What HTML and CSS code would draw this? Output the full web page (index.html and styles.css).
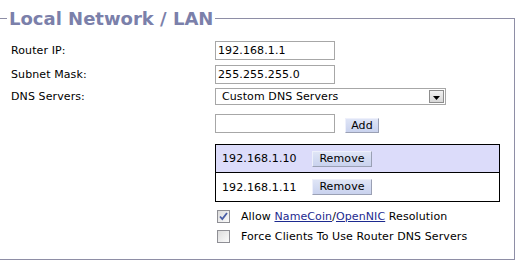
FILE: index.html
```html
<!DOCTYPE html>
<html>
<head>
<meta charset="utf-8">
<link rel="stylesheet" href="styles.css">
</head>
<body>
<fieldset class="panel">
  <legend class="title">Local Network / LAN</legend>
  <div class="form">
    <div class="row r1">
      <span class="label">Router IP:</span>
      <span class="input">192.168.1.1</span>
    </div>
    <div class="row r2">
      <span class="label">Subnet Mask:</span>
      <span class="input">255.255.255.0</span>
    </div>
    <div class="row r3">
      <span class="label">DNS Servers:</span>
      <span class="select">
        <span class="select-text">Custom DNS Servers</span>
        <span class="select-arrow"><svg width="7" height="4" viewBox="0 0 7 4"><path d="M0 0H7L3.5 4Z" fill="#000"/></svg></span>
      </span>
    </div>
    <div class="row r4">
      <span class="label"></span>
      <span class="input"></span>
      <span class="btn add">Add</span>
    </div>
    <div class="row r5">
      <span class="label"></span>
      <div class="dnslist">
        <div class="dns sel"><span class="ip">192.168.1.10</span><span class="btn remove">Remove</span></div>
        <div class="dns"><span class="ip">192.168.1.11</span><span class="btn remove">Remove</span></div>
      </div>
    </div>
    <div class="row r6">
      <span class="label"></span>
      <span class="check on"><svg width="9" height="9" viewBox="0 0 9 9"><path d="M1 4.5L3.3 7L8 1" fill="none" stroke="#4a5ea6" stroke-width="1.8"/></svg></span>
      <span class="ctext">Allow <a href="#">NameCoin</a>/<a href="#">OpenNIC</a> Resolution</span>
    </div>
    <div class="row r7">
      <span class="label"></span>
      <span class="check"></span>
      <span class="ctext">Force Clients To Use Router DNS Servers</span>
    </div>
  </div>
</fieldset>
</body>
</html>
```

FILE: styles.css
```css
html, body {
  margin: 0;
  padding: 0;
  background: #fff;
}
body {
  font-family: "DejaVu Sans", Verdana, sans-serif;
  font-size: 11px;
  letter-spacing: 0.1px;
  color: #000;
}
.panel {
  margin: 8px 2px 0 -2px;
  padding: 0 0 16px 8px;
  border: 1px solid #8e8ea6;
  min-width: 0;
}
.title {
  padding: 0 2px;
  font-size: 18px;
  line-height: 21px;
  font-weight: bold;
  letter-spacing: 0;
  color: #7b80aa;
}
.form {
  padding-left: 4px;
  padding-top: 12px;
}
.row {
  display: flex;
  align-items: center;
}
.label {
  width: 204px;
  flex: none;
}
.r2 { margin-top: 5px; }
.r3 { margin-top: 4px; }
.r4 { margin-top: 9px; }
.r5 { margin-top: 11px; align-items: flex-start; }
.r6 { margin-top: 8px; }
.r7 { margin-top: 7px; }
.input {
  box-sizing: border-box;
  width: 120px;
  height: 19px;
  border: 1px solid #a7a7a7;
  padding: 0 2px;
  line-height: 17px;
  background: #fff;
}
.select {
  box-sizing: border-box;
  width: 231px;
  height: 17px;
  border: 1px solid #a7a7a7;
  display: flex;
  align-items: center;
  justify-content: space-between;
  padding: 0 1px 0 6px;
}
.select-text {
  line-height: 15px;
}
.select-arrow {
  box-sizing: border-box;
  width: 15px;
  height: 13px;
  border: 1px solid #8d8d8d;
  background: linear-gradient(#f2f2f2, #d8d8d8);
  display: flex;
  align-items: center;
  justify-content: center;
  padding-top: 3px;
}
.btn {
  box-sizing: border-box;
  display: inline-block;
  height: 15px;
  line-height: 13px;
  text-align: center;
  background: linear-gradient(#dfe5f6, #c9d2ee);
  border: 1px solid;
  border-color: #eef0fb #9aa0b4 #9aa0b4 #eef0fb;
  color: #000;
}
.add {
  width: 34px;
  margin-left: 10px;
  margin-top: 3px;
}
.dnslist {
  box-sizing: border-box;
  width: 285px;
  border: 1px solid #000;
}
.dns {
  display: flex;
  align-items: center;
  height: 27px;
  padding-left: 6px;
}
.dns + .dns {
  border-top: 1px solid #000;
  height: 28px;
}
.dns.sel {
  background: #dcdcfa;
}
.ip {
  width: 90px;
}
.remove {
  width: 60px;
  height: 16px;
  line-height: 14px;
}
.check {
  box-sizing: border-box;
  width: 13px;
  height: 13px;
  margin-left: 2px;
  border: 1px solid #8f8f95;
  background: linear-gradient(135deg, #dcdcdc, #fbfbfb);
  display: flex;
  align-items: center;
  justify-content: center;
}
.ctext {
  margin-left: 11px;
}
.ctext a {
  color: #1d2a8f;
  text-decoration: underline;
}
```
